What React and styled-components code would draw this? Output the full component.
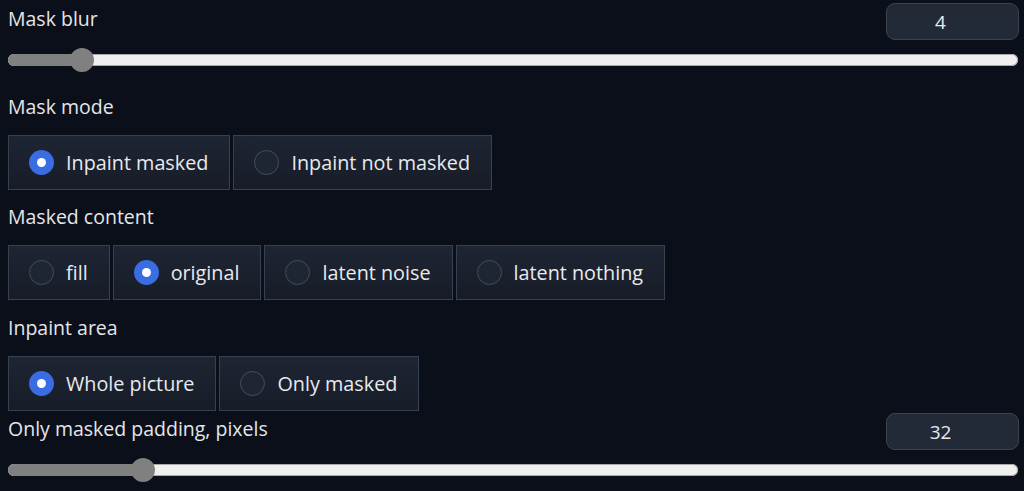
import React from 'react'
import styled, { createGlobalStyle } from 'styled-components'

const GlobalStyle = createGlobalStyle`
  html, body {
    margin: 0;
    padding: 0;
    background: #0b0f19;
  }
  body {
    font-family: "Open Sans", "Noto Sans", sans-serif;
    color: #e4e6ea;
  }
`

const Page = styled.div`
  display: flex;
  flex-direction: column;
  padding: 3px 5px 0 8px;
  min-height: 488px;
  background: #0b0f19;
`

const SliderBlock = styled.div`
  display: flex;
  flex-direction: column;
  margin-top: ${p => p.$top || 0}px;
  margin-bottom: ${p => p.$bottom || 0}px;
`

const HeaderRow = styled.div`
  display: flex;
  justify-content: space-between;
  align-items: center;
  height: 37px;
`

const Label = styled.div`
  font-size: 19.5px;
  line-height: 28px;
  height: 28px;
  color: #e4e6ea;
`

const HeaderLabel = styled(Label)`
  margin-top: -5px;
`

const NumberBox = styled.div`
  box-sizing: border-box;
  width: 133px;
  height: 37px;
  padding-right: 24px;
  border: 1px solid #3a4352;
  border-radius: 9px;
  background: #222a38;
  display: flex;
  align-items: center;
  justify-content: center;
  font-size: 19px;
  color: #e8eaee;
`

const TrackArea = styled.div`
  height: 40px;
  display: flex;
  align-items: center;
  margin-right: 1px;
  margin-bottom: -2px;
`

const Track = styled.div`
  position: relative;
  flex: 1;
  height: 12px;
  border-radius: 6px;
  background: #efefef;
  box-shadow: inset 0 0 0 1px #a8a8a8;
`

const Fill = styled.div`
  height: 100%;
  border-radius: 6px 0 0 6px;
  background: #808080;
`

const Thumb = styled.div`
  position: absolute;
  top: 50%;
  width: 24px;
  height: 24px;
  margin-left: -12px;
  margin-top: -12px;
  border-radius: 50%;
  background: #808080;
`

const Section = styled.div`
  display: flex;
  flex-direction: column;
  gap: 14px;
  margin-bottom: ${p => p.$bottom || 0}px;
`

const Group = styled.div`
  display: flex;
  gap: 3px;
`

const Option = styled.div`
  box-sizing: border-box;
  height: 55px;
  display: flex;
  align-items: center;
  gap: 12px;
  padding: 0 21px 0 20px;
  border: 1px solid #384151;
  background: linear-gradient(180deg, #1e2533 0%, #171c28 100%);
  font-size: 19.8px;
  color: #e8eaee;
`

const Dot = styled.span`
  box-sizing: border-box;
  width: 25px;
  height: 25px;
  border-radius: 50%;
  flex: none;
  display: flex;
  align-items: center;
  justify-content: center;
  background: ${p => (p.$on ? '#3a6ce3' : '#1e2533')};
  border: ${p => (p.$on ? 'none' : '1.5px solid #454e5e')};
  &::after {
    content: '';
    display: ${p => (p.$on ? 'block' : 'none')};
    width: 9px;
    height: 9px;
    border-radius: 50%;
    background: #ffffff;
  }
`

function Slider({ label, value, min, max, top, bottom }) {
  const pct = ((value - min) / (max - min)) * 100
  const pos = `calc(12px + (100% - 24px) * ${pct / 100})`
  return (
    <SliderBlock $top={top} $bottom={bottom}>
      <HeaderRow>
        <HeaderLabel>{label}</HeaderLabel>
        <NumberBox>{value}</NumberBox>
      </HeaderRow>
      <TrackArea>
        <Track>
          <Fill style={{ width: pos }} />
          <Thumb style={{ left: pos }} />
        </Track>
      </TrackArea>
    </SliderBlock>
  )
}

function RadioGroup({ label, options, selected, bottom }) {
  return (
    <Section $bottom={bottom}>
      <Label>{label}</Label>
      <Group>
        {options.map(o => (
          <Option key={o}>
            <Dot $on={o === selected} />
            {o}
          </Option>
        ))}
      </Group>
    </Section>
  )
}

export default function App() {
  return (
    <>
      <GlobalStyle />
      <Page>
        <Slider label="Mask blur" value={4} min={0} max={64} bottom={15} />
        <RadioGroup
          label="Mask mode"
          options={['Inpaint masked', 'Inpaint not masked']}
          selected="Inpaint masked"
          bottom={13}
        />
        <RadioGroup
          label="Masked content"
          options={['fill', 'original', 'latent noise', 'latent nothing']}
          selected="original"
          bottom={14}
        />
        <RadioGroup
          label="Inpaint area"
          options={['Whole picture', 'Only masked']}
          selected="Whole picture"
        />
        <Slider label="Only masked padding, pixels" value={32} min={0} max={256} top={2} />
      </Page>
    </>
  )
}
